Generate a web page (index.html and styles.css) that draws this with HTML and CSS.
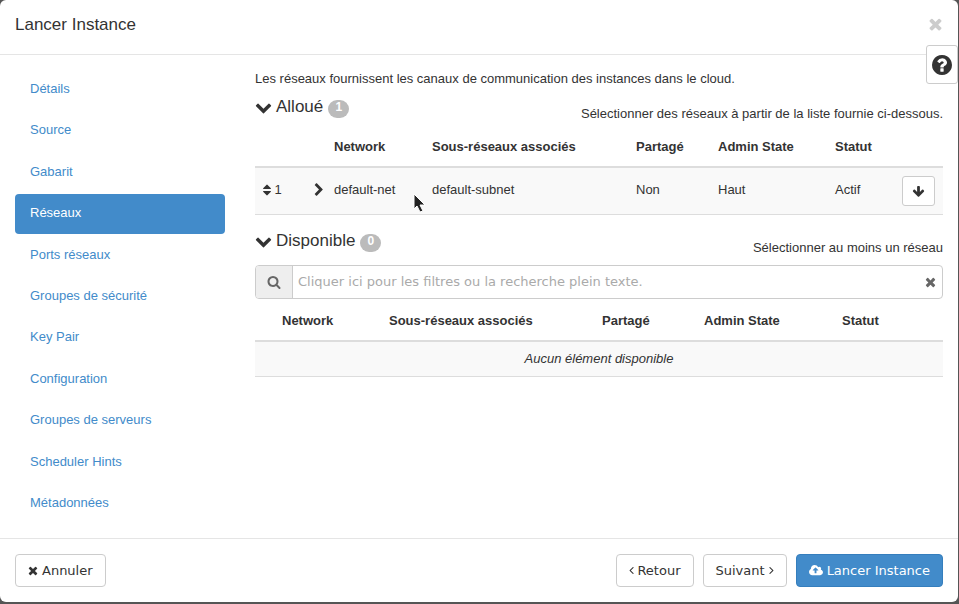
FILE: index.html
```
<!DOCTYPE html>
<html lang="fr">
  <head>
    <meta charset="UTF-8" />
    <meta name="viewport" content="width=device-width, initial-scale=1.0" />
    <title>Lancer Instance</title>
    <link rel="stylesheet" href="styles.css">
  </head>
  <body>
    <svg class="sprite" aria-hidden="true">
      <symbol id="times" viewBox="192 0 1408 1792"><path d="M1490 1322q0 40-28 68l-136 136q-28 28-68 28t-68-28l-294-294-294 294q-28 28-68 28t-68-28l-136-136q-28-28-28-68t28-68l294-294-294-294q-28-28-28-68t28-68l136-136q28-28 68-28t68 28l294 294 294-294q28-28 68-28t68 28l136 136q28 28 28 68t-28 68l-294 294 294 294q28 28 28 68z"/></symbol>
      <symbol id="chevron-down" viewBox="0 0 1792 1792"><path d="M1683 808l-742 741q-19 19-45 19t-45-19l-742-741q-19-19-19-45.500t19-45.500l166-165q19-19 45-19t45 19l531 531 531-531q19-19 45-19t45 19l166 165q19 19 19 45.500t-19 45.500z"/></symbol>
      <symbol id="chevron-right" viewBox="256 0 1280 1792"><path d="M1363 877l-742 742q-19 19-45 19t-45-19l-166-166q-19-19-19-45t19-45l531-531-531-531q-19-19-19-45t19-45l166-166q19-19 45-19t45 19l742 742q19 19 19 45t-19 45z"/></symbol>
      <symbol id="question" viewBox="128 128 1536 1536"><path d="M1024 1376v-192q0-14-9-23t-23-9h-192q-14 0-23 9t-9 23v192q0 14 9 23t23 9h192q14 0 23-9t9-23zm256-672q0-88-55.500-163t-138.500-116-170-41q-243 0-371 213-15 24 8 42l132 100q7 6 19 6 16 0 25-12 53-68 86-92 34-24 86-24 48 0 85.500 26t37.500 59q0 38-20 61t-68 45q-63 28-115.500 86.500t-52.500 125.500v36q0 14 9 23t23 9h192q14 0 23-9t9-23q0-19 21.500-49.500t54.500-49.500q32-18 49-28.500t46-35 44.500-48 28-60.500 12.500-81zm384 192q0 209-103 385.500t-279.500 279.500-385.500 103-385.500-103-279.500-279.500-103-385.500 103-385.500 279.500-279.500 385.500-103 385.500 103 279.500 279.500 103 385.500z"/></symbol>
      <symbol id="search" viewBox="0 0 1792 1792"><path d="M1216 832q0-185-131.500-316.500t-316.500-131.500-316.500 131.500-131.500 316.500 131.500 316.500 316.500 131.500 316.500-131.500 131.500-316.500zm512 832q0 52-38 90t-90 38q-54 0-90-38l-343-342q-179 124-399 124-143 0-273.500-55.500t-225-150-150-225-55.500-273.500 55.500-273.500 150-225 225-150 273.500-55.500 273.500 55.500 225 150 150 225 55.500 273.500q0 220-124 399l343 343q37 37 37 90z"/></symbol>
      <symbol id="sort" viewBox="384 0 1024 1792"><path d="M1408 1088q0 26-19 45l-448 448q-19 19-45 19t-45-19l-448-448q-19-19-19-45t19-45 45-19h896q26 0 45 19t19 45zm0-384q0 26-19 45t-45 19h-896q-26 0-45-19t-19-45 19-45l448-448q19-19 45-19t45 19l448 448q19 19 19 45z"/></symbol>
      <symbol id="arrow-down" viewBox="0 0 1792 1792"><path d="M1675 832q0 53-37 90l-651 652q-39 37-91 37-53 0-90-37l-651-652q-38-36-38-90 0-53 38-91l74-75q39-37 91-37 53 0 90 37l294 294v-704q0-52 38-90t90-38h128q52 0 90 38t38 90v704l294-294q37-37 90-37 52 0 91 37l75 75q37 39 37 91z"/></symbol>
      <symbol id="angle-left" viewBox="544 64 704 1792"><path d="M1203 544q0 13-10 23l-393 393 393 393q10 10 10 23t-10 23l-50 50q-10 10-23 10t-23-10l-466-466q-10-10-10-23t10-23l466-466q10-10 23-10t23 10l50 50q10 10 10 23z"/></symbol>
      <symbol id="angle-right" viewBox="544 64 704 1792"><path d="M1171 960q0 13-10 23l-466 466q-10 10-23 10t-23-10l-50-50q-10-10-10-23t10-23l393-393-393-393q-10-10-10-23t10-23l50-50q10-10 23-10t23 10l466 466q10 10 10 23z"/></symbol>
      <symbol id="cloud" viewBox="0 0 1920 1792"><path d="M1280 864q0-14-9-23l-352-352q-9-9-23-9t-23 9l-351 351q-10 12-10 24 0 14 9 23t23 9h224v352q0 13 9.500 22.500t22.500 9.500h192q13 0 22.500-9.500t9.500-22.500v-352h224q13 0 22.500-9.500t9.500-22.500zm640 288q0 159-112.500 271.500t-271.500 112.500h-1088q-185 0-316.500-131.500t-131.500-316.500q0-130 70-240t188-165q-2-30-2-43 0-212 150-362t362-150q156 0 285.500 87t188.500 231q71-62 166-62 106 0 181 75t75 181q0 76-41 138 130 31 213.500 135.500t83.500 238.500z"/></symbol>
    </svg>

    <div class="modal" role="dialog" aria-labelledby="modal-title">
      <header class="modal-header">
        <h1 id="modal-title">Lancer Instance</h1>
        <button type="button" class="close" aria-label="Fermer"><svg class="icon"><use href="#times"/></svg></button>
      </header>

      <button type="button" class="help" aria-label="Aide"><svg class="icon"><use href="#question"/></svg></button>

      <div class="modal-body">
        <nav class="steps">
          <a href="#">Détails</a>
          <a href="#">Source</a>
          <a href="#">Gabarit</a>
          <a href="#" class="active" aria-current="step">Réseaux</a>
          <a href="#">Ports réseaux</a>
          <a href="#">Groupes de sécurité</a>
          <a href="#">Key Pair</a>
          <a href="#">Configuration</a>
          <a href="#">Groupes de serveurs</a>
          <a href="#">Scheduler Hints</a>
          <a href="#">Métadonnées</a>
        </nav>

        <main class="content">
          <p class="intro">Les réseaux fournissent les canaux de communication des instances dans le cloud.</p>

          <section class="allocated">
            <div class="section-head">
              <h2><svg class="icon"><use href="#chevron-down"/></svg>Alloué <span class="badge">1</span></h2>
              <span class="hint">Sélectionner des réseaux à partir de la liste fournie ci-dessous.</span>
            </div>
            <table>
              <colgroup>
                <col class="col-order"><col class="col-expand"><col class="col-network"><col>
                <col class="col-shared"><col class="col-state"><col class="col-status"><col class="col-action">
              </colgroup>
              <thead>
                <tr>
                  <th></th>
                  <th></th>
                  <th>Network</th>
                  <th>Sous-réseaux associés</th>
                  <th>Partagé</th>
                  <th>Admin State</th>
                  <th>Statut</th>
                  <th></th>
                </tr>
              </thead>
              <tbody>
                <tr>
                  <td><svg class="icon sort"><use href="#sort"/></svg> 1</td>
                  <td><button type="button" class="expand" aria-label="Afficher les détails"><svg class="icon"><use href="#chevron-right"/></svg></button></td>
                  <td>default-net</td>
                  <td>default-subnet</td>
                  <td>Non</td>
                  <td>Haut</td>
                  <td>Actif</td>
                  <td><button type="button" class="btn btn-move" aria-label="Retirer"><svg class="icon"><use href="#arrow-down"/></svg></button></td>
                </tr>
              </tbody>
            </table>
          </section>

          <section class="available">
            <div class="section-head">
              <h2><svg class="icon"><use href="#chevron-down"/></svg>Disponible <span class="badge">0</span></h2>
              <span class="hint">Sélectionner au moins un réseau</span>
            </div>
            <div class="search">
              <label for="search-input" aria-label="Rechercher"><svg class="icon"><use href="#search"/></svg></label>
              <input type="text" id="search-input" placeholder="Cliquer ici pour les filtres ou la recherche plein texte." />
              <button type="button" aria-label="Effacer"><svg class="icon"><use href="#times"/></svg></button>
            </div>
            <table>
              <colgroup>
                <col class="col-blank"><col class="col-name"><col>
                <col class="col-shared-wide"><col class="col-state-wide"><col class="col-status-wide">
              </colgroup>
              <thead>
                <tr>
                  <th></th>
                  <th>Network</th>
                  <th>Sous-réseaux associés</th>
                  <th>Partagé</th>
                  <th>Admin State</th>
                  <th>Statut</th>
                </tr>
              </thead>
              <tbody>
                <tr>
                  <td colspan="6" class="empty">Aucun élément disponible</td>
                </tr>
              </tbody>
            </table>
          </section>
        </main>
      </div>

      <footer class="modal-footer">
        <button type="button" class="btn cancel"><svg class="icon"><use href="#times"/></svg>Annuler</button>
        <button type="button" class="btn btn-back"><svg class="icon angle"><use href="#angle-left"/></svg>Retour</button>
        <button type="button" class="btn">Suivant<svg class="icon angle"><use href="#angle-right"/></svg></button>
        <button type="button" class="btn btn-primary"><svg class="icon cloud"><use href="#cloud"/></svg>Lancer Instance</button>
      </footer>
    </div>

    <svg class="pointer" viewBox="0 0 14 20" aria-hidden="true"><path d="M1 1v15l3-3 3 6 3-1-3-6h5z"/></svg>
  </body>
</html>
```
FILE: styles.css
```
* {
  box-sizing: border-box;
}
body {
  margin: 0;
  padding: 0 1px 2px 0;
  background: #555;
  color: #333;
  font-family: "Liberation Sans", Arial, sans-serif;
  font-size: 13px;
  line-height: 18px;
}
button,
input {
  font-family: "DejaVu Sans", sans-serif;
  font-size: 13px;
  color: #333;
}
button {
  cursor: pointer;
}
.sprite {
  display: none;
}
.icon {
  width: 13px;
  height: 13px;
  fill: currentColor;
}

.modal {
  display: flex;
  flex-direction: column;
  min-height: calc(100vh - 2px);
  background: #fff;
  border-radius: 6px;
}
.modal-header {
  display: flex;
  justify-content: space-between;
  align-items: flex-start;
  padding: 15px;
  height: 55px;
  border-bottom: 1px solid #e5e5e5;
}
h1,
h2 {
  margin: 0;
  font-size: 17px;
  font-weight: normal;
  line-height: 20px;
}
.close {
  display: flex;
  padding: 0;
  border: 0;
  background: none;
  color: #ccc;
}
.close .icon {
  width: 15px;
  height: 18px;
}
.help {
  position: absolute;
  top: 45px;
  right: 1px;
  display: flex;
  align-items: center;
  justify-content: center;
  width: 32px;
  height: 39px;
  padding: 0;
  border: 1px solid #ccc;
  border-radius: 3px;
  background: #fff;
}
.help .icon {
  width: 20px;
  height: 20px;
}

.modal-body {
  display: flex;
  flex: 1;
  gap: 30px;
  padding: 15px 15px 14px;
}
.steps {
  display: flex;
  flex-direction: column;
  justify-content: space-between;
  width: 210px;
}
.steps a {
  padding: 10px 15px 12px;
  border-radius: 4px;
  color: #428bca;
  text-decoration: none;
}
.steps .active {
  background: #428bca;
  color: #fff;
}
.content {
  flex: 1;
  min-width: 0;
}
.intro {
  margin: 0 0 9px;
}
.section-head {
  display: flex;
  justify-content: space-between;
  align-items: flex-start;
  height: 33px;
}
.section-head h2 {
  display: flex;
  align-items: flex-start;
}
.section-head .icon {
  width: 17px;
  height: 20px;
  margin-right: 4px;
}
.badge {
  min-width: 21px;
  height: 18px;
  margin: 3px 0 0 5px;
  border-radius: 9px;
  background: #bbb;
  color: #fff;
  font-size: 12px;
  font-weight: bold;
  line-height: 14px;
  text-align: center;
}
.hint {
  padding-top: 8px;
}

table {
  width: 100%;
  border-collapse: separate;
  border-spacing: 0;
  table-layout: fixed;
}
th,
td {
  padding: 8px;
  text-align: left;
}
th {
  padding-bottom: 10px;
  border-bottom: 2px solid #ddd;
  white-space: nowrap;
}
td {
  height: 35px;
  background: #f9f9f9;
  border-bottom: 1px solid #ddd;
  vertical-align: top;
}
.allocated {
  margin-bottom: 16px;
}
.allocated td {
  padding-top: 13px;
  height: 47px;
}
.allocated td:last-child {
  padding-top: 8px;
}
.col-order {
  width: 55px;
}
.col-expand {
  width: 16px;
}
.col-network {
  width: 98px;
}
.col-shared {
  width: 82px;
}
.col-state {
  width: 117px;
}
.col-status {
  width: 67px;
}
.col-action {
  width: 49px;
}
.col-blank {
  width: 19px;
}
.col-name {
  width: 107px;
}
.col-shared-wide {
  width: 102px;
}
.col-state-wide {
  width: 138px;
}
.col-status-wide {
  width: 109px;
}
.sort {
  width: 8px;
  height: 14px;
  vertical-align: -3px;
}
.expand {
  display: flex;
  padding: 2px 0;
  border: 0;
  background: none;
}
.expand .icon {
  width: 10px;
  height: 14px;
  flex: none;
}
.allocated td:nth-child(2) {
  padding-left: 4px;
  padding-right: 0;
}
.empty {
  font-style: italic;
  text-align: center;
}

.search {
  display: flex;
  height: 34px;
  margin: 1px 0 5px;
  border: 1px solid #ccc;
  border-radius: 4px;
}
.search label {
  display: flex;
  align-items: center;
  justify-content: center;
  width: 37px;
  background: #eee;
  border-right: 1px solid #ccc;
  border-radius: 3px 0 0 3px;
  color: #666;
}
.search label .icon {
  height: 14px;
  width: 14px;
}
.search input {
  flex: 1;
  min-width: 0;
  padding: 0 5px 2px;
  border: 0;
  background: none;
}
.search input::placeholder {
  color: #aaa;
}
.search button {
  display: flex;
  align-items: center;
  padding: 0 6px;
  border: 0;
  background: none;
  color: #666;
}
.search button .icon {
  width: 11px;
  height: 14px;
}

.modal-footer {
  display: flex;
  gap: 9px;
  padding: 15px;
  border-top: 1px solid #e5e5e5;
}
.btn {
  display: flex;
  align-items: center;
  justify-content: center;
  gap: 4px;
  height: 33px;
  padding: 0 12px;
  border: 1px solid #ccc;
  border-radius: 4px;
  background: #fff;
}
.btn .icon {
  flex: none;
}
.cancel {
  margin-right: auto;
}
.cancel .icon {
  width: 10px;
}
.btn .angle {
  width: 5px;
}
.btn .cloud {
  width: 14px;
}
.btn-back {
  gap: 3px;
}
.btn-primary {
  background: #428bca;
  border-color: #357ebd;
  color: #fff;
}
.btn-move {
  width: 33px;
  height: 30px;
  padding: 0;
  border-radius: 3px;
}

.pointer {
  position: absolute;
  left: 413px;
  top: 193px;
  width: 14px;
  height: 20px;
  fill: #222;
  stroke: #fff;
  pointer-events: none;
}
```
